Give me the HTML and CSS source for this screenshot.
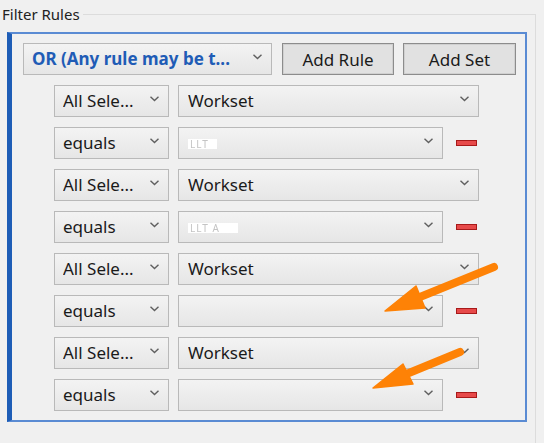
FILE: index.html
```html
<!DOCTYPE html>
<html>
<head>
<meta charset="utf-8">
<link rel="stylesheet" href="styles.css">
</head>
<body>
<div class="group">
  <div class="group-head">
    <span class="group-title">Filter Rules</span>
    <span class="group-line"></span>
  </div>
  <div class="group-body">
    <div class="panel">
      <div class="top-row">
        <div class="select select-or"><span class="sel-text">OR (Any rule may be t...</span><svg class="chev" width="9" height="6" viewBox="0 0 9 6"><polyline points="0.5,0.8 4.5,4.6 8.5,0.8" fill="none" stroke="#606060" stroke-width="1.4"/></svg></div>
        <button class="btn btn-rule">Add Rule</button>
        <button class="btn btn-set">Add Set</button>
      </div>
      <div class="rules">
        <div class="rule">
          <div class="select select-param"><span class="sel-text">All Sele...</span><svg class="chev" width="9" height="6" viewBox="0 0 9 6"><polyline points="0.5,0.8 4.5,4.6 8.5,0.8" fill="none" stroke="#606060" stroke-width="1.4"/></svg></div>
          <div class="select select-long"><span class="sel-text">Workset</span><svg class="chev" width="9" height="6" viewBox="0 0 9 6"><polyline points="0.5,0.8 4.5,4.6 8.5,0.8" fill="none" stroke="#606060" stroke-width="1.4"/></svg></div>
        </div>
        <div class="rule">
          <div class="select select-param"><span class="sel-text">equals</span><svg class="chev" width="9" height="6" viewBox="0 0 9 6"><polyline points="0.5,0.8 4.5,4.6 8.5,0.8" fill="none" stroke="#606060" stroke-width="1.4"/></svg></div>
          <div class="select select-short"><span class="sel-text"><span class="redact redact-a">LLT</span></span><svg class="chev" width="9" height="6" viewBox="0 0 9 6"><polyline points="0.5,0.8 4.5,4.6 8.5,0.8" fill="none" stroke="#606060" stroke-width="1.4"/></svg></div>
          <span class="minus"></span>
        </div>
        <div class="rule">
          <div class="select select-param"><span class="sel-text">All Sele...</span><svg class="chev" width="9" height="6" viewBox="0 0 9 6"><polyline points="0.5,0.8 4.5,4.6 8.5,0.8" fill="none" stroke="#606060" stroke-width="1.4"/></svg></div>
          <div class="select select-long"><span class="sel-text">Workset</span><svg class="chev" width="9" height="6" viewBox="0 0 9 6"><polyline points="0.5,0.8 4.5,4.6 8.5,0.8" fill="none" stroke="#606060" stroke-width="1.4"/></svg></div>
        </div>
        <div class="rule">
          <div class="select select-param"><span class="sel-text">equals</span><svg class="chev" width="9" height="6" viewBox="0 0 9 6"><polyline points="0.5,0.8 4.5,4.6 8.5,0.8" fill="none" stroke="#606060" stroke-width="1.4"/></svg></div>
          <div class="select select-short"><span class="sel-text"><span class="redact redact-b">LLT A</span></span><svg class="chev" width="9" height="6" viewBox="0 0 9 6"><polyline points="0.5,0.8 4.5,4.6 8.5,0.8" fill="none" stroke="#606060" stroke-width="1.4"/></svg></div>
          <span class="minus"></span>
        </div>
        <div class="rule">
          <div class="select select-param"><span class="sel-text">All Sele...</span><svg class="chev" width="9" height="6" viewBox="0 0 9 6"><polyline points="0.5,0.8 4.5,4.6 8.5,0.8" fill="none" stroke="#606060" stroke-width="1.4"/></svg></div>
          <div class="select select-long"><span class="sel-text">Workset</span><svg class="chev" width="9" height="6" viewBox="0 0 9 6"><polyline points="0.5,0.8 4.5,4.6 8.5,0.8" fill="none" stroke="#606060" stroke-width="1.4"/></svg></div>
        </div>
        <div class="rule">
          <div class="select select-param"><span class="sel-text">equals</span><svg class="chev" width="9" height="6" viewBox="0 0 9 6"><polyline points="0.5,0.8 4.5,4.6 8.5,0.8" fill="none" stroke="#606060" stroke-width="1.4"/></svg></div>
          <div class="select select-short"><span class="sel-text"></span><svg class="chev" width="9" height="6" viewBox="0 0 9 6"><polyline points="0.5,0.8 4.5,4.6 8.5,0.8" fill="none" stroke="#606060" stroke-width="1.4"/></svg></div>
          <span class="minus"></span>
        </div>
        <div class="rule">
          <div class="select select-param"><span class="sel-text">All Sele...</span><svg class="chev" width="9" height="6" viewBox="0 0 9 6"><polyline points="0.5,0.8 4.5,4.6 8.5,0.8" fill="none" stroke="#606060" stroke-width="1.4"/></svg></div>
          <div class="select select-long"><span class="sel-text">Workset</span><svg class="chev" width="9" height="6" viewBox="0 0 9 6"><polyline points="0.5,0.8 4.5,4.6 8.5,0.8" fill="none" stroke="#606060" stroke-width="1.4"/></svg></div>
        </div>
        <div class="rule">
          <div class="select select-param"><span class="sel-text">equals</span><svg class="chev" width="9" height="6" viewBox="0 0 9 6"><polyline points="0.5,0.8 4.5,4.6 8.5,0.8" fill="none" stroke="#606060" stroke-width="1.4"/></svg></div>
          <div class="select select-short"><span class="sel-text"></span><svg class="chev" width="9" height="6" viewBox="0 0 9 6"><polyline points="0.5,0.8 4.5,4.6 8.5,0.8" fill="none" stroke="#606060" stroke-width="1.4"/></svg></div>
          <span class="minus"></span>
        </div>
      </div>
    </div>
  </div>
</div>
<svg class="arrows" width="544" height="443" viewBox="0 0 544 443">
  <line x1="494" y1="267" x2="415" y2="299" stroke="#fe8206" stroke-width="8" stroke-linecap="round"/>
  <polygon points="385,311 416,286 425,308" fill="#fe8206" stroke="#fe8206" stroke-width="1.5" stroke-linejoin="round"/>
  <line x1="460" y1="352" x2="404" y2="375" stroke="#fe8206" stroke-width="8" stroke-linecap="round"/>
  <polygon points="373,388 403,364 413,384" fill="#fe8206" stroke="#fe8206" stroke-width="1.5" stroke-linejoin="round"/>
</svg>
</body>
</html>
```

FILE: styles.css
```css
* { box-sizing: border-box; }
html, body {
  margin: 0;
  padding: 0;
  background: #f0f0f0;
  font-family: "Noto Sans", "Open Sans", sans-serif;
  color: #1a1a1a;
}
body {
  width: 544px;
  height: 443px;
  overflow: hidden;
  position: relative;
}
.group {
  width: 536px;
}
.group-head {
  display: flex;
  align-items: flex-start;
  height: 28px;
}
.group-title {
  font-size: 15px;
  line-height: 28px;
  height: 28px;
  padding-left: 2px;
  padding-right: 3px;
  color: #222;
}
.group-line {
  flex: 1;
  height: 14px;
  margin-top: 14px;
  border-top: 1px solid #dcdcdc;
  border-right: 1px solid #dcdcdc;
}
.group-body {
  border-right: 1px solid #dcdcdc;
  padding: 4px 9px 0 7px;
  height: 415px;
}
.panel {
  width: 520px;
  border: 2px solid #5a8bd3;
  border-left: 5px solid #1e5db6;
  padding: 9px 0 9px 11px;
}
.top-row {
  display: flex;
  gap: 10px;
  height: 32px;
}
.select {
  display: flex;
  align-items: center;
  height: 32px;
  border: 1px solid #b9b9b9;
  background: linear-gradient(#f3f3f3, #e6e6e6);
  font-size: 17px;
  padding: 0 9px 0 8px;
}
.sel-text {
  flex: 1;
  white-space: nowrap;
  overflow: hidden;
  line-height: 30px;
}
.chev {
  flex: none;
  margin-top: -5px;
}
.select-or {
  width: 249px;
  font-weight: bold;
  color: #1f5cb6;
}
.btn {
  height: 32px;
  border: 1px solid #8c8c8c;
  box-shadow: inset 0 0 0 1px #d0d0d0;
  background: #e1e1e1;
  font-family: "Noto Sans", "Open Sans", sans-serif;
  font-size: 17px;
  color: #1a1a1a;
  padding: 0;
}
.btn-rule { width: 112px; }
.btn-set { width: 113px; margin-left: -1px; }
.rules {
  display: flex;
  flex-direction: column;
  gap: 10px;
  margin-top: 10px;
  padding-left: 31px;
}
.rule {
  display: flex;
  align-items: center;
  gap: 9px;
  height: 32px;
}
.select-param { width: 115px; }
.select-long { width: 301px; padding-left: 9px; }
.select-short { width: 265px; padding-left: 9px; }
.minus {
  width: 21px;
  height: 6px;
  background: #e74a4a;
  border: 1px solid #a81a1a;
  margin-left: 4px;
}
.redact {
  display: inline-block;
  background: #fff;
  color: #c4c4c4;
  font-size: 10px;
  line-height: 10px;
  height: 10px;
  vertical-align: middle;
  letter-spacing: 1px;
  filter: blur(0.5px);
}
.redact-a { padding: 0 8px 0 2px; }
.redact-b { margin-left: -4px; padding: 0 18px 0 6px; }
.arrows {
  position: absolute;
  left: 0;
  top: 0;
  pointer-events: none;
}
```
